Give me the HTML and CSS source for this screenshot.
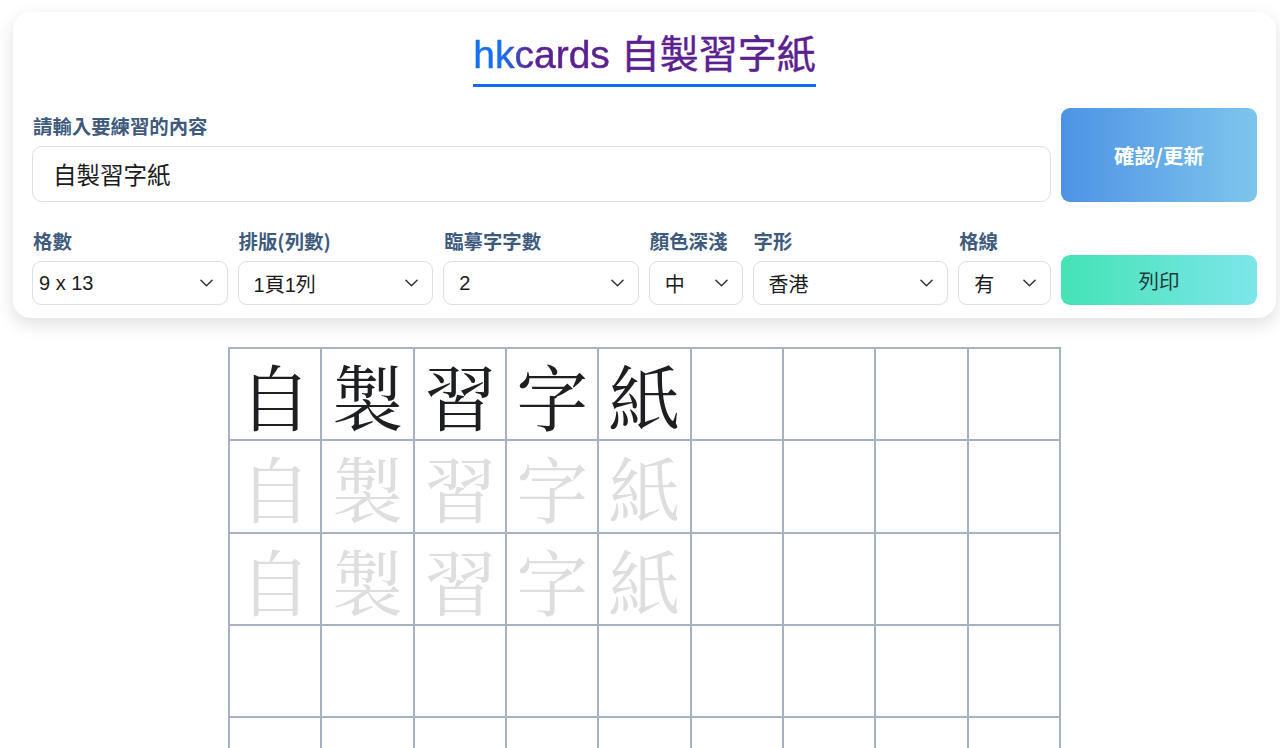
FILE: index.html
```html
<!DOCTYPE html>
<html lang="zh-Hant">
<head>
<meta charset="utf-8">
<title>hkcards 自製習字紙</title>
<link rel="stylesheet" href="styles.css">
</head>
<body>
<div class="page">
  <div class="card">
    <div class="title-wrap">
      <h1 class="title"><span class="brand">hkcards</span> 自製習字紙</h1>
    </div>
    <div class="row row-text">
      <div class="field">
        <label class="label">請輸入要練習的內容</label>
        <div class="text-input">自製習字紙</div>
      </div>
      <button class="btn btn-update">確認/更新</button>
    </div>
    <div class="row row-opts">
      <div class="field">
        <label class="label">格數</label>
        <div class="select select-tight"><span>9 x 13</span><svg class="chev" viewBox="0 0 14 8"><path d="M1 1l6 6 6-6"/></svg></div>
      </div>
      <div class="field">
        <label class="label">排版(列數)</label>
        <div class="select"><span>1頁1列</span><svg class="chev" viewBox="0 0 14 8"><path d="M1 1l6 6 6-6"/></svg></div>
      </div>
      <div class="field">
        <label class="label">臨摹字字數</label>
        <div class="select"><span>2</span><svg class="chev" viewBox="0 0 14 8"><path d="M1 1l6 6 6-6"/></svg></div>
      </div>
      <div class="field">
        <label class="label">顏色深淺</label>
        <div class="select"><span>中</span><svg class="chev" viewBox="0 0 14 8"><path d="M1 1l6 6 6-6"/></svg></div>
      </div>
      <div class="field">
        <label class="label">字形</label>
        <div class="select"><span>香港</span><svg class="chev" viewBox="0 0 14 8"><path d="M1 1l6 6 6-6"/></svg></div>
      </div>
      <div class="field">
        <label class="label">格線</label>
        <div class="select"><span>有</span><svg class="chev" viewBox="0 0 14 8"><path d="M1 1l6 6 6-6"/></svg></div>
      </div>
      <button class="btn btn-print">列印</button>
    </div>
  </div>

  <table class="sheet">
    <tr><td class="main">自</td><td class="main">製</td><td class="main">習</td><td class="main">字</td><td class="main">紙</td><td></td><td></td><td></td><td></td></tr>
    <tr><td class="guide">自</td><td class="guide">製</td><td class="guide">習</td><td class="guide">字</td><td class="guide">紙</td><td></td><td></td><td></td><td></td></tr>
    <tr><td class="guide">自</td><td class="guide">製</td><td class="guide">習</td><td class="guide">字</td><td class="guide">紙</td><td></td><td></td><td></td><td></td></tr>
    <tr><td></td><td></td><td></td><td></td><td></td><td></td><td></td><td></td><td></td></tr>
    <tr><td></td><td></td><td></td><td></td><td></td><td></td><td></td><td></td><td></td></tr>
    <tr><td></td><td></td><td></td><td></td><td></td><td></td><td></td><td></td><td></td></tr>
    <tr><td></td><td></td><td></td><td></td><td></td><td></td><td></td><td></td><td></td></tr>
    <tr><td></td><td></td><td></td><td></td><td></td><td></td><td></td><td></td><td></td></tr>
    <tr><td></td><td></td><td></td><td></td><td></td><td></td><td></td><td></td><td></td></tr>
    <tr><td></td><td></td><td></td><td></td><td></td><td></td><td></td><td></td><td></td></tr>
    <tr><td></td><td></td><td></td><td></td><td></td><td></td><td></td><td></td><td></td></tr>
    <tr><td></td><td></td><td></td><td></td><td></td><td></td><td></td><td></td><td></td></tr>
    <tr><td></td><td></td><td></td><td></td><td></td><td></td><td></td><td></td><td></td></tr>
  </table>
</div>
</body>
</html>
```

FILE: styles.css
```css
* { box-sizing: border-box; }
html, body { margin: 0; padding: 0; background: #fff; }
body {
  font-family: "Liberation Sans", "Noto Sans CJK TC", sans-serif;
  color: #222;
}
.page {
  margin: 0 4px 0 13px;
  padding-top: 12px;
}
.card {
  background: #fff;
  border-radius: 18px;
  box-shadow: 0 6px 18px rgba(0, 0, 0, 0.13);
  padding: 17px 19px 13px 19px;
}
.title-wrap {
  display: flex;
  justify-content: center;
}
.title {
  margin: 0;
  font-size: 39px;
  font-weight: 400;
  line-height: 52px;
  color: #5b2191;
  border-bottom: 3px solid #1569f2;
  padding-bottom: 3px;
  font-family: "Liberation Sans", "Noto Sans CJK TC", sans-serif;
  -webkit-text-stroke: 0.4px currentColor;
}
.brand {
  background: linear-gradient(90deg, #1173f4 0%, #1a6ef2 22%, #5b2191 42%, #5b2191 100%);
  -webkit-background-clip: text;
  background-clip: text;
  color: transparent;
  -webkit-text-stroke: 0.5px transparent;
}
.row {
  display: grid;
  column-gap: 10px;
}
.row-text {
  grid-template-columns: 1fr 196px;
  margin-top: 21px;
}
.row-opts {
  grid-template-columns: 196fr 196fr 196fr 94fr 196fr 93fr 196px;
  margin-top: 28px;
  align-items: end;
}
.field {
  display: flex;
  flex-direction: column;
  justify-content: flex-end;
  min-width: 0;
}
.label {
  font-family: "Noto Sans CJK TC", sans-serif;
  font-size: 19.4px;
  font-weight: 700;
  line-height: 22px;
  color: #3e5b7e;
  margin-bottom: 9px;
  padding-left: 1px;
  white-space: nowrap;
}
.text-input {
  height: 56px;
  border: 1px solid #dcdfe4;
  border-radius: 10px;
  padding: 0 20px;
  display: flex;
  align-items: center;
  font-family: "Noto Sans CJK TC", sans-serif;
  font-size: 23.5px;
  color: #1c1c1c;
}
.select {
  height: 44px;
  border: 1px solid #dcdfe4;
  border-radius: 9px;
  padding: 0 14px 0 15px;
  display: flex;
  align-items: center;
  justify-content: space-between;
  font-family: "Liberation Sans", "Noto Sans CJK TC", sans-serif;
  font-size: 20px;
  color: #1c1c1c;
}
.select-tight { padding-left: 6px; }
.chev {
  width: 13px;
  height: 8px;
  fill: none;
  stroke: #333;
  stroke-width: 1.6;
  stroke-linecap: round;
  stroke-linejoin: round;
  flex: none;
}
.btn {
  border: none;
  border-radius: 9px;
  font-family: "Noto Sans CJK TC", sans-serif;
  font-size: 20.5px;
  cursor: pointer;
}
.btn-update {
  height: 94px;
  align-self: end;
  background: linear-gradient(90deg, #4d93e5 0%, #7ec5ec 100%);
  color: #fff;
  font-weight: 700;
}
.btn-print {
  height: 50px;
  background: linear-gradient(90deg, #44e3b4 0%, #7de6ea 100%);
  color: #1e3a3a;
  font-weight: 400;
}
.sheet {
  margin: 29px auto 0 auto;
  border-collapse: collapse;
  table-layout: fixed;
  width: 831px;
}
.sheet td {
  width: 92.3px;
  height: 92.3px;
  border: 2px solid #a6b1c2;
  padding: 0;
  text-align: center;
  vertical-align: middle;
  font-family: "AR PL UKai TW", "AR PL UKai CN", "TW-Kai", "Noto Serif CJK TC", "Noto Sans CJK TC", serif;
  font-size: 72px;
  line-height: 76px;
}
.sheet td.main { color: #1d1f22; font-weight: 400; }
.sheet td.guide { color: #dedede; }
```
